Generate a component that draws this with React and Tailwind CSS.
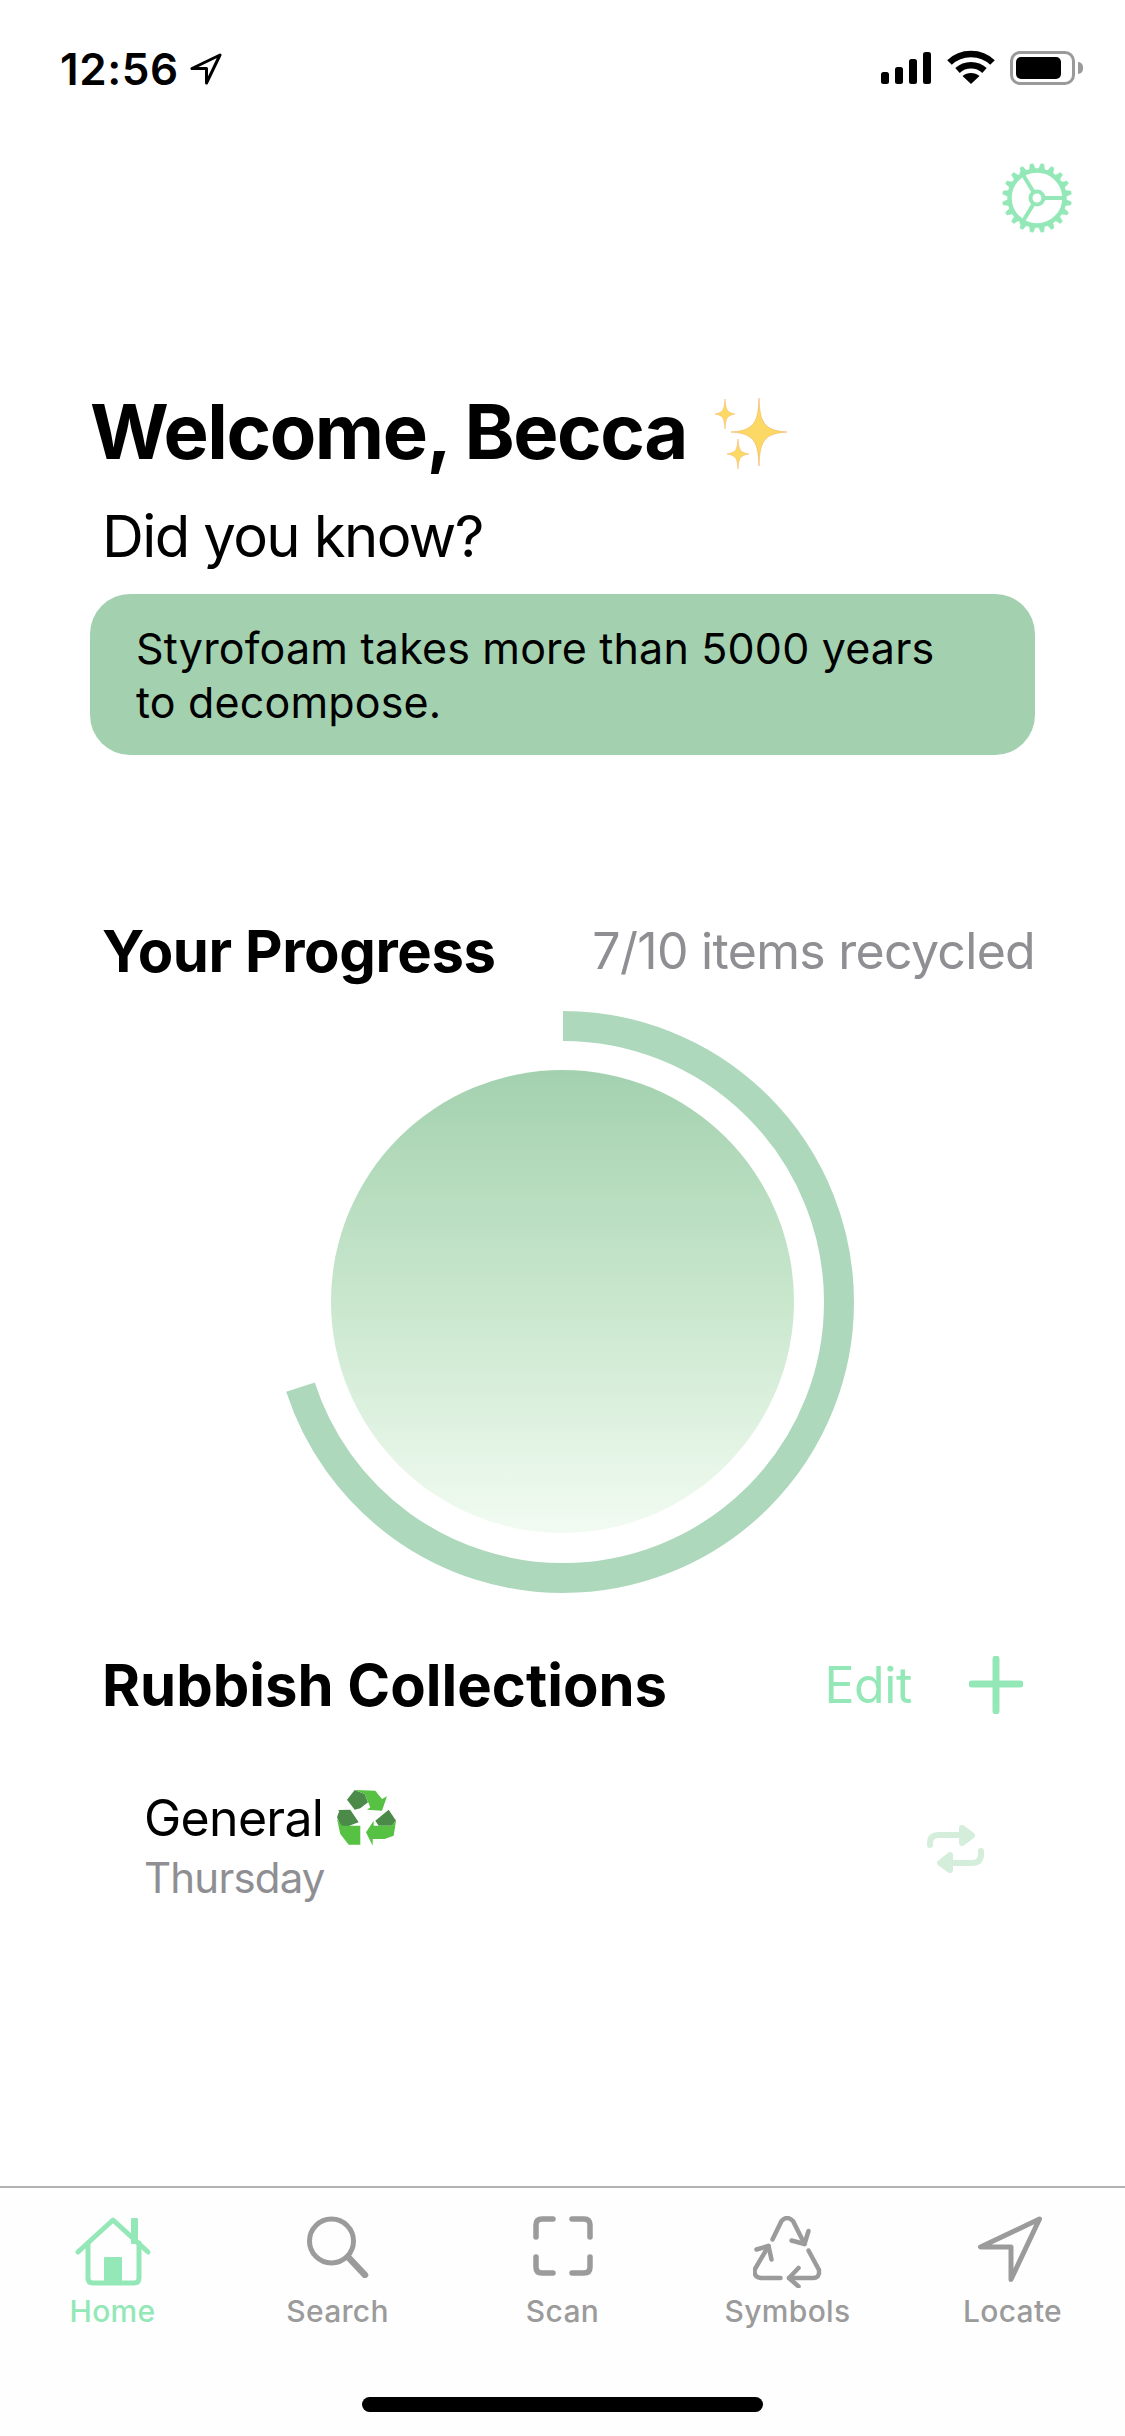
const sans = "font-['Inter','Liberation_Sans',sans-serif]";

function Gear() {
  const teeth = Array.from({ length: 20 }, (_, i) => (i * 360) / 20 + 9);
  return (
    <svg width="72" height="72" viewBox="0 0 72 72" fill="none" stroke="#94e8b8">
      {teeth.map((a) => (
        <path key={a} d="M32.5 9L34.5 1.5H37.5L39.5 9Z" fill="#94e8b8" strokeWidth="0.5" transform={`rotate(${a} 36 36)`} />
      ))}
      <circle cx="36" cy="36" r="27.5" strokeWidth="4.5" />
      <circle cx="36" cy="36" r="6.5" strokeWidth="4" />
      <path d="M43 36H63M32.5 30L20 9.5M32.5 42L20 62.5" strokeWidth="4" />
    </svg>
  );
}

function Sparkles() {
  const star = (x, y, w, h) => `M${x} ${y - h}C${x + 0.8} ${y - h * 0.25} ${x + w * 0.2} ${y - 1.5} ${x + w} ${y}C${x + w * 0.2} ${y + 1.5} ${x + 0.8} ${y + h * 0.25} ${x} ${y + h}C${x - 0.8} ${y + h * 0.25} ${x - w * 0.2} ${y + 1.5} ${x - w} ${y}C${x - w * 0.2} ${y - 1.5} ${x - 0.8} ${y - h * 0.25} ${x} ${y - h}Z`;
  return (
    <svg className="translate-y-[3px]" width="76" height="74" viewBox="0 0 76 74">
      <path d={star(44, 35, 28, 34)} fill="#fcd964" stroke="#f5b060" strokeWidth="0.6" />
      <path d={star(10, 17, 10, 15)} fill="#fcd964" stroke="#f5b060" strokeWidth="0.5" />
      <path d={star(23, 57, 11, 15)} fill="#fcd964" stroke="#f5b060" strokeWidth="0.5" />
    </svg>
  );
}

function RecycleEmoji() {
  return (
    <svg width="60" height="56" viewBox="0 0 60 56">
      <path d="M10 9.7L17.7 0L27.7 4L31 12.3L23.3 18.3L17.7 19.7Z" fill="#4b8a48" />
      <path d="M17.7 0L38.3 .7L45 9L50 6.3L45 20.7L30 19.7L33.3 17.3L27.7 4Z" fill="#56c142" />
      <path d="M0 27.3L2.3 20.7L.7 20L13.3 19.7L21.7 32.3L16.7 34L5 39Z" fill="#4b8a48" />
      <path d="M0 29L5 35.7H23.3V54.7H11.7L3.3 44Z" fill="#56c142" />
      <path d="M38.3 30.7L51.7 19.7L59 30.7L55 35.7H41.7Z" fill="#4b8a48" />
      <path d="M59 30.7L56.7 45.7L47.7 49H35.7V55.7L29 42.3L36.7 30.7V35.7H55Z" fill="#56c142" />
    </svg>
  );
}

function TabIcon({ name }) {
  if (name === "Home")
    return (
      <svg width="80" height="72" viewBox="0 0 80 72" fill="none" stroke="#94e8b8" strokeWidth="5" strokeLinecap="round" strokeLinejoin="round">
        <path d="M5 36L40 4L75 36" />
        <path d="M15 27V62Q15 67 20 67H61Q66 67 66 62V27" />
        <rect x="32" y="42" width="16" height="25" fill="#94e8b8" stroke="#94e8b8" strokeWidth="2" />
        <rect x="59" y="3" width="5" height="24" fill="#94e8b8" stroke="#94e8b8" strokeWidth="2" />
      </svg>
    );
  if (name === "Search")
    return (
      <svg width="62" height="62" viewBox="0 0 62 62" fill="none" stroke="#9b9b9b" strokeLinecap="round">
        <circle cx="24.5" cy="25" r="22" strokeWidth="5" />
        <path d="M42 42L58 59" strokeWidth="6.5" />
      </svg>
    );
  if (name === "Scan")
    return (
      <svg width="60" height="60" viewBox="0 0 60 60" fill="none" stroke="#9b9b9b" strokeWidth="5.5" strokeLinecap="round">
        <path d="M3 21V9Q3 3 9 3H20" />
        <path d="M39 3H51Q57 3 57 9V21" />
        <path d="M3 41V51Q3 57 9 57H20" />
        <path d="M39 57H51Q57 57 57 51V41" />
      </svg>
    );
  if (name === "Symbols")
    return (
      <svg width="70" height="72" viewBox="0 0 70 72" fill="none" stroke="#9b9b9b" strokeWidth="4.5" strokeLinecap="round" strokeLinejoin="round">
        <path d="M19.5 23.5L28.5 5Q34 -1 40 5L51.5 28" />
        <path d="M55.5 15L51.5 28L38.5 24.5" />
        <path d="M55.5 34.5L66 54Q67 62 60 62H36" />
        <path d="M45.5 52L36 62L45.5 70.5" />
        <path d="M27.5 62H8Q0 61 2 53L15.5 30" />
        <path d="M3.5 33.5L15.5 30L18.5 43.5" />
      </svg>
    );
  return (
    <svg className="-translate-x-[3px]" width="66" height="66" viewBox="0 0 66 66" fill="none" stroke="#9b9b9b" strokeWidth="5" strokeLinejoin="round" strokeLinecap="round">
      <path d="M62.5 3L3.5 31H34V63.5Z" />
    </svg>
  );
}

const tabs = ["Home", "Search", "Scan", "Symbols", "Locate"];

export default function App() {
  return (
    <div className={`${sans} w-[1125px] h-[2436px] bg-white flex flex-col text-black overflow-hidden`}>
      <div className="h-[132px] shrink-0 flex items-start justify-between pl-[60px] pr-[42px] pt-[44px]">
        <div className="flex items-center gap-[11px]">
          <span className="text-[44px] leading-[50px] font-semibold tracking-[0.6px]">12:56</span>
          <svg width="32" height="32" viewBox="0 0 32 32" fill="none" stroke="#000" strokeWidth="3" strokeLinejoin="round">
            <path d="M30 2L2 15.5H16.5V30Z" />
          </svg>
        </div>
        <div className="flex items-center gap-[15px] pt-[6px]">
          <svg width="52" height="34" viewBox="0 0 52 34" fill="#000">
            <rect x="1" y="21" width="8" height="12" rx="2.5" />
            <rect x="15" y="16" width="8" height="17" rx="2.5" />
            <rect x="29" y="8" width="8" height="25" rx="2.5" />
            <rect x="43" y="1" width="8" height="32" rx="2.5" />
          </svg>
          <svg width="48" height="35" viewBox="0 0 48 35" fill="none" stroke="#000" strokeWidth="6.5">
            <path d="M2.5 12.5C14 1 34 1 45.5 12.5" />
            <path d="M10.5 20.5C18 13.5 30 13.5 37.5 20.5" />
            <path d="M24 34L15.5 26C20 22 28 22 32.5 26Z" fill="#000" stroke="none" />
          </svg>
          <div className="flex items-center gap-[3px]">
            <div className="w-[65px] h-[34px] rounded-[10px] border-[3px] border-[#9a9a9a] p-[3px]">
              <div className="w-[45px] h-full rounded-[5px] bg-black" />
            </div>
            <div className="w-[5px] h-[12px] rounded-r-full bg-[#9a9a9a]" />
          </div>
        </div>
      </div>

      <div className="flex justify-end pr-[52px] mt-[30px] shrink-0">
        <Gear />
      </div>

      <div className="mt-[152px] pl-[90px] flex items-center gap-[28px] h-[90px] shrink-0">
        <h1 className="text-[76px] leading-[90px] font-bold tracking-[-1.5px]">Welcome, Becca</h1>
        <Sparkles />
      </div>
      <p className="mt-[27px] ml-[102px] text-[58px] leading-[66px] tracking-[-1.6px]">Did you know?</p>
      <div className="mt-[25px] ml-[90px] w-[945px] h-[161px] rounded-[40px] bg-[#a3d1af] pl-[46px] pt-[27px] text-[43px] leading-[54px] tracking-[0.17px]">
        Styrofoam takes more than 5000 years
        <br />
        to decompose.
      </div>

      <div className="mt-[166px] ml-[102px] mr-[90px] flex items-center justify-between h-[60px] shrink-0">
        <h2 className="text-[58px] leading-[60px] font-bold tracking-[-0.4px]">Your Progress</h2>
        <span className="text-[50px] leading-[60px] text-[#8e8e93] tracking-[-0.7px]">7/10 items recycled</span>
      </div>

      <div className="mt-[30px] mx-auto w-[582px] h-[582px] relative shrink-0 flex items-center justify-center">
        <svg className="absolute inset-0" width="582" height="582" viewBox="0 0 582 582" fill="none">
          <circle cx="291" cy="291" r="276" stroke="#aed8bc" strokeWidth="30" pathLength="100" strokeDasharray="70 30" transform="rotate(-90 291 291)" />
        </svg>
        <div className="w-[463px] h-[463px] -mt-[2px] rounded-full bg-gradient-to-b from-[#a3d1af] via-[#c9e7cd] to-[#f2fbf2]" />
      </div>

      <div className="mt-[57px] ml-[102px] mr-[102px] flex items-center justify-between h-[70px] shrink-0">
        <h2 className="text-[58px] leading-[70px] font-bold">Rubbish Collections</h2>
        <div className="flex items-center gap-[57px]">
          <span className="text-[50px] leading-[70px] text-[#94e8b8] tracking-[-0.4px]">Edit</span>
          <svg width="54" height="58" viewBox="0 0 54 58" fill="none" stroke="#94e8b8" strokeLinecap="round">
            <path d="M27 3V55M3 28H51" strokeWidth="7" />
          </svg>
        </div>
      </div>

      <div className="mt-[67px] ml-[144px] mr-[140px] flex items-center justify-between shrink-0">
        <div>
          <div className="flex items-center gap-[14px] h-[62px]">
            <span className="text-[50px] leading-[62px] tracking-[-0.7px]">General</span>
            <RecycleEmoji />
          </div>
          <div className="text-[42px] leading-[58px] text-[#8e8e93] tracking-[-0.8px]">Thursday</div>
        </div>
        <svg className="mt-[3px]" width="58" height="48" viewBox="0 0 58 48" fill="none" stroke="#d5eedb" strokeWidth="6" strokeLinecap="round" strokeLinejoin="round">
          <path d="M3 20V18Q3 10 12 10H35" />
          <path d="M35 3L45 10.5L35 18Z" fill="#d5eedb" />
          <path d="M54 26V29Q54 38 45 38H23" />
          <path d="M23 30L13 38L23 45Z" fill="#d5eedb" />
        </svg>
      </div>

      <div className="mt-auto h-[250px] shrink-0 border-t-2 border-[#b2b2b2] bg-[#fefefe] flex flex-col">
        <div className="grid grid-cols-5 pt-[28px]">
          {tabs.map((t) => (
            <div key={t} className="flex flex-col items-center">
              <div className="h-[77px] flex items-start justify-center">
                <TabIcon name={t} />
              </div>
              <span className={`text-[30px] leading-[36px] font-medium tracking-[0.3px] ${t === "Home" ? "text-[#94e8b8]" : "text-[#9b9b9b]"}`}>{t}</span>
            </div>
          ))}
        </div>
        <div className="mt-auto mb-[24px] mx-auto w-[401px] h-[15px] rounded-full bg-black" />
      </div>
    </div>
  );
}
